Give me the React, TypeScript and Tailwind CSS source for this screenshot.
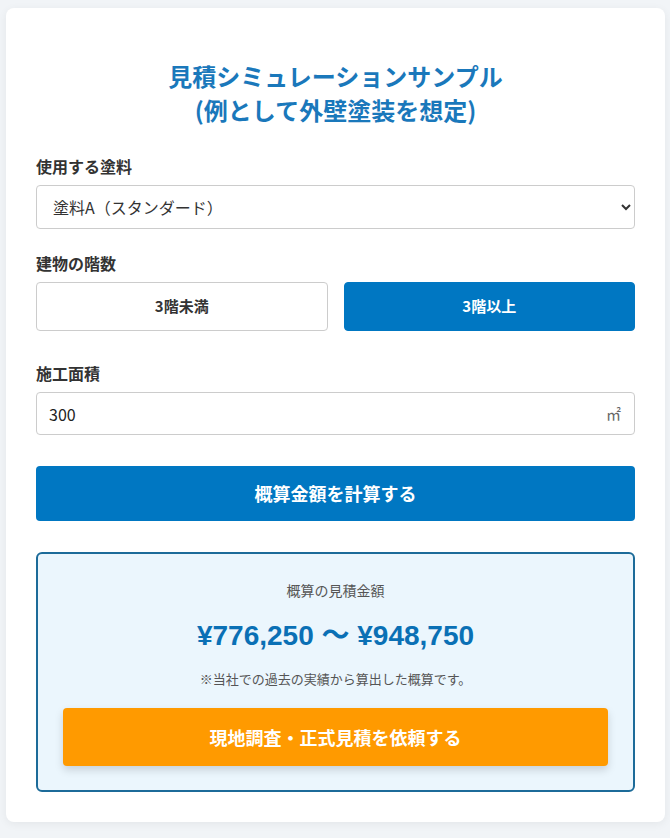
import { useState } from "react";

const paints = [
  { id: "a", label: "塗料A（スタンダード）" },
  { id: "b", label: "塗料B（ハイグレード）" },
  { id: "c", label: "塗料C（プレミアム）" },
];

export default function App() {
  const [paint, setPaint] = useState("a");
  const [floors, setFloors] = useState<"low" | "high">("high");
  const [area, setArea] = useState("300");

  return (
    <div
      className="min-h-screen bg-[#f1f4f7] pl-[6px] pr-[5px] pt-[8px] pb-[15px] text-[#333]"
      style={{ fontFamily: '"Noto Sans CJK JP", "Noto Sans", sans-serif' }}
    >
      <div className="rounded-lg bg-white px-[30px] pt-[51px] pb-[30px] shadow-[0_2px_10px_rgba(0,0,0,0.06)]">
        <h1 className="text-center text-[24px] font-bold leading-[34px] text-[#1a78bb]">
          見積シミュレーションサンプル
          <br />
          (例として外壁塗装を想定)
        </h1>

        {/* 塗料 */}
        <div className="mt-[28px]">
          <label className="block text-[16px] font-bold leading-[22px]">使用する塗料</label>
          <select
            value={paint}
            onChange={(e) => setPaint(e.target.value)}
            className="mt-[8px] h-[44px] w-full rounded border border-[#ccc] bg-white px-[12px] text-[16px] text-[#333]"
          >
            {paints.map((p) => (
              <option key={p.id} value={p.id}>
                {p.label}
              </option>
            ))}
          </select>
        </div>

        {/* 階数 */}
        <div className="mt-[23px]">
          <label className="block text-[16px] font-bold leading-[22px]">建物の階数</label>
          <div className="mt-[8px] grid grid-cols-2 gap-[16px]">
            <button
              onClick={() => setFloors("low")}
              className={
                floors === "low"
                  ? "h-[49px] rounded border border-[#0077c2] bg-[#0077c2] text-[15px] font-bold text-white"
                  : "h-[49px] rounded border border-[#ccc] bg-white text-[15px] font-bold text-[#333]"
              }
            >
              3階未満
            </button>
            <button
              onClick={() => setFloors("high")}
              className={
                floors === "high"
                  ? "h-[49px] rounded border border-[#0077c2] bg-[#0077c2] text-[15px] font-bold text-white"
                  : "h-[49px] rounded border border-[#ccc] bg-white text-[15px] font-bold text-[#333]"
              }
            >
              3階以上
            </button>
          </div>
        </div>

        {/* 面積 */}
        <div className="mt-[31px]">
          <label className="block text-[16px] font-bold leading-[22px]">施工面積</label>
          <div className="relative mt-[8px]">
            <input
              type="text"
              value={area}
              onChange={(e) => setArea(e.target.value)}
              className="h-[43px] w-full rounded border border-[#ccc] bg-white pl-[12px] pr-[40px] text-[16px] text-[#222] outline-none"
            />
            <span className="absolute right-[14px] top-1/2 -translate-y-1/2 text-[15px] text-[#666]">㎡</span>
          </div>
        </div>

        <button className="mt-[31px] h-[55px] w-full rounded bg-[#0077c2] text-[18px] font-bold text-white">
          概算金額を計算する
        </button>

        {/* 結果 */}
        <div className="mt-[31px] rounded-md border-2 border-[#1c6b99] bg-[#ebf6fd] px-[25px] pt-[26px] pb-[24px] text-center">
          <p className="text-[14px] leading-[20px] text-[#555]">概算の見積金額</p>
          <p
            className="mt-[18px] text-[28px] font-bold leading-[36px] text-[#0a70b5]"
            style={{ fontFamily: '"Liberation Sans", "Noto Sans CJK JP", sans-serif' }}
          >
            ¥776,250 〜 ¥948,750
          </p>
          <p className="mt-[15px] text-[13px] leading-[20px] text-[#555]">※当社での過去の実績から算出した概算です。</p>
          <button className="mt-[19px] h-[58px] w-full rounded bg-[#ff9a00] text-[18px] font-bold text-white shadow-[0_4px_8px_rgba(0,0,0,0.15)]">
            現地調査・正式見積を依頼する
          </button>
        </div>
      </div>
    </div>
  );
}
